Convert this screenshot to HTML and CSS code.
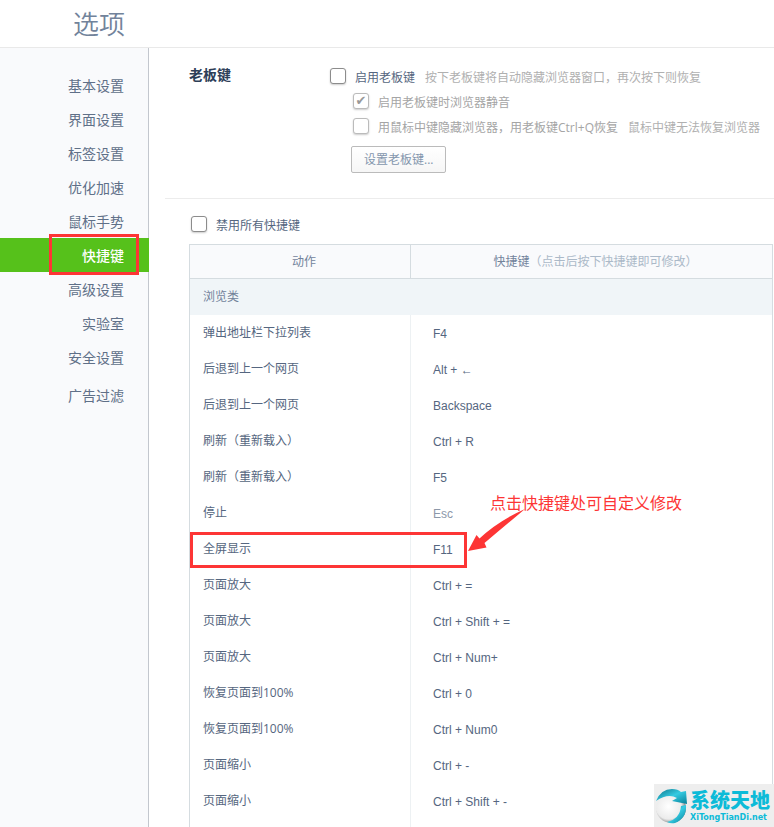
FILE: index.html
```
<!DOCTYPE html>
<html lang="zh-CN">
<head>
    <meta charset="utf-8">
    <title>选项</title>
    <link rel="stylesheet" href="styles.css">
</head>
<body>
    <header class="header">
        <h1>选项</h1>
    </header>
    <div class="page">
        <nav class="sidebar">
            <a href="#basic">基本设置</a>
            <a href="#ui">界面设置</a>
            <a href="#tabs">标签设置</a>
            <a href="#speed">优化加速</a>
            <a href="#gesture">鼠标手势</a>
            <a href="#hotkey" class="active">快捷键<span class="mark"></span></a>
            <a href="#advanced">高级设置</a>
            <a href="#lab">实验室</a>
            <a href="#security">安全设置</a>
            <a href="#adblock" class="extra">广告过滤</a>
        </nav>
        <main class="content">
            <section class="boss">
                <h2>老板键</h2>
                <div class="boss-options">
                    <div class="option">
                        <input type="checkbox" id="boss-on">
                        <label for="boss-on">启用老板键</label>
                        <span class="tip">按下老板键将自动隐藏浏览器窗口，再次按下则恢复</span>
                    </div>
                    <div class="option sub">
                        <input type="checkbox" id="boss-mute" checked disabled>
                        <label for="boss-mute">启用老板键时浏览器静音</label>
                    </div>
                    <div class="option sub">
                        <input type="checkbox" id="boss-mouse" disabled>
                        <label for="boss-mouse">用鼠标中键隐藏浏览器，用老板键Ctrl+Q恢复</label>
                        <span class="tip">鼠标中键无法恢复浏览器</span>
                    </div>
                    <button type="button" class="btn">设置老板键...</button>
                </div>
            </section>
            <section class="keys">
                <div class="option disable-all">
                    <input type="checkbox" id="disable-all">
                    <label for="disable-all">禁用所有快捷键</label>
                </div>
                <table>
                    <thead>
                        <tr>
                            <th class="action">动作</th>
                            <th>快捷键<span>（点击后按下快捷键即可修改）</span></th>
                        </tr>
                    </thead>
                    <tbody>
                        <tr class="group"><td colspan="2">浏览类</td></tr>
                        <tr><td>弹出地址栏下拉列表</td><td>F4</td></tr>
                        <tr><td>后退到上一个网页</td><td>Alt + ←</td></tr>
                        <tr><td>后退到上一个网页</td><td>Backspace</td></tr>
                        <tr><td>刷新（重新载入）</td><td>Ctrl + R</td></tr>
                        <tr><td>刷新（重新载入）</td><td>F5</td></tr>
                        <tr><td>停止</td><td class="fixed">Esc</td></tr>
                        <tr>
                            <td class="marked">
                                全屏显示
                                <span class="mark"></span>
                                <span class="note">点击快捷键处可自定义修改</span>
                                <svg class="arrow" width="58" height="44" viewBox="0 0 58 44">
                                    <path d="M0 42 L8.500 26 L11.500 29.500 Q30 12 57 0 Q38 16 16.500 34 L18.500 38.500 Z" fill="#fd3535"/>
                                </svg>
                            </td>
                            <td>F11</td>
                        </tr>
                        <tr><td>页面放大</td><td>Ctrl + =</td></tr>
                        <tr><td>页面放大</td><td>Ctrl + Shift + =</td></tr>
                        <tr><td>页面放大</td><td>Ctrl + Num+</td></tr>
                        <tr><td>恢复页面到100%</td><td>Ctrl + 0</td></tr>
                        <tr><td>恢复页面到100%</td><td>Ctrl + Num0</td></tr>
                        <tr><td>页面缩小</td><td>Ctrl + -</td></tr>
                        <tr><td>页面缩小</td><td>Ctrl + Shift + -</td></tr>
                        <tr><td></td><td></td></tr>
                    </tbody>
                </table>
            </section>
        </main>
    </div>
    <div class="watermark">
        <svg width="36" height="38" viewBox="0 0 36 38">
            <defs>
                <radialGradient id="ball" cx="42%" cy="45%" r="60%">
                    <stop offset="0" stop-color="#fff"/>
                    <stop offset="0.7" stop-color="#ececec"/>
                    <stop offset="1" stop-color="#777"/>
                </radialGradient>
                <linearGradient id="swirl" x1="0" y1="0" x2="1" y2="1">
                    <stop offset="0" stop-color="#0a7186"/>
                    <stop offset="0.5" stop-color="#35cbe2"/>
                    <stop offset="1" stop-color="#067f98"/>
                </linearGradient>
            </defs>
            <circle cx="17" cy="21" r="15" fill="url(#ball)"/>
            <path d="M2 14 Q7 2 18 2 Q24 2 27 5 L32 4 L33 17 L18 14 L23 11 Q14 6 2 14 Z" fill="url(#swirl)"/>
            <path d="M32 18 Q33 31 21 36 Q17 37 13 35 Q26 32 27 19 Z" fill="url(#swirl)"/>
        </svg>
        <div class="watermark-text">
            <strong>系统天地</strong>
            <span>XiTongTianDi.net</span>
        </div>
    </div>
</body>
</html>
```
FILE: styles.css
```
* {
    box-sizing: border-box;
}
body {
    margin: 0;
    height: 100vh;
    overflow: hidden;
    display: flex;
    flex-direction: column;
    background: #fff;
    color: #556680;
    font-family: "Open Sans", "Noto Sans CJK SC", sans-serif;
    font-size: 12px;
    line-height: 18px;
}
.header {
    flex: none;
    height: 48px;
    padding-left: 73px;
    border-bottom: 1px solid #e9e9e9;
}
.header h1 {
    margin: 0;
    font-size: 26px;
    font-weight: 350;
    font-family: "Noto Sans CJK SC", sans-serif;
    line-height: 46px;
    color: #72839b;
}
.page {
    flex: 1;
    display: flex;
    min-height: 0;
}

/* Left menu */
.sidebar {
    flex: none;
    width: 149px;
    padding-top: 20px;
    background: #f9fafc;
    border-right: 1px solid #c3c7ce;
}
.sidebar a {
    display: block;
    height: 34px;
    padding-right: 24px;
    font-size: 14px;
    line-height: 36px;
    text-align: right;
    text-decoration: none;
    color: #5f7088;
}
.sidebar .active {
    position: relative;
    margin-right: -1px;
    padding-right: 25px;
    background: #56c11b;
    color: #fff;
    font-weight: 500;
}
.sidebar .extra {
    margin-top: 4px;
}
.mark {
    position: absolute;
    border: 3px solid #fd3535;
}
.sidebar .mark {
    top: -4px;
    left: 49px;
    right: 10px;
    height: 41px;
}

/* Options */
.content {
    flex: 1;
    min-width: 0;
    padding-left: 16px;
    display: flex;
    flex-direction: column;
}
.boss {
    flex: none;
    display: flex;
    padding: 17px 0 25px 24px;
    border-bottom: 1px solid #ececec;
}
.boss h2 {
    width: 141px;
    margin: 0;
    font-size: 14px;
    font-weight: 700;
    line-height: 20px;
    color: #2d3e57;
}
.option {
    display: flex;
    align-items: center;
    height: 25px;
    white-space: nowrap;
}
.option label {
    margin-left: 9px;
}
.tip {
    margin-left: 10px;
    color: #b0b0b0;
}
.sub {
    padding-left: 23px;
    color: #a5a5a5;
}
.option input {
    appearance: none;
    flex: none;
    width: 16px;
    height: 16px;
    margin: 0 0 3px;
    border: 1px solid #8c8c8c;
    border-radius: 3px;
    background: #fff;
    box-shadow: 0 1px 2px #ccc;
}
.option input:disabled {
    border-color: #bbb;
}
.option input:checked::before {
    content: "✔";
    display: block;
    font-family: "DejaVu Sans", sans-serif;
    font-size: 13px;
    line-height: 14px;
    text-align: center;
    color: #999;
}
.btn {
    display: block;
    height: 27px;
    margin: 6px 0 0 21px;
    padding: 0 12px;
    border: 1px solid #bbb;
    border-radius: 2px;
    background: linear-gradient(#fff, #f6f6f6);
    color: #8496ad;
    font: inherit;
}

/* Hotkey table */
.keys {
    flex: none;
    padding: 13px 1px 0 24px;
}
.disable-all {
    height: 27px;
    padding-left: 2px;
}
table {
    width: 100%;
    margin-top: 5px;
    border-collapse: separate;
    border-spacing: 0;
    border: 1px solid #d5dce0;
    table-layout: fixed;
}
th {
    height: 34px;
    padding: 0 0 0 8px;
    border-bottom: 1px solid #d5dce0;
    background: #f9fafc;
    color: #72839b;
    font-weight: 400;
}
th span {
    color: #abb9c8;
}
.action {
    width: 221px;
    border-right: 1px solid #d5dce0;
}
td {
    height: 36px;
    padding: 0 0 0 13px;
}
td:first-child {
    border-right: 1px solid #edf1f3;
}
td + td {
    padding: 2px 0 0 22px;
    font-family: "Liberation Sans", "Noto Sans CJK SC", sans-serif;
}
.group td:first-child {
    border-right: 0;
    background: #f0f5f8;
    color: #72839b;
}
.fixed {
    color: #8c98a9;
}
.marked {
    position: relative;
}
.marked .mark {
    top: 1px;
    left: 0;
    width: 277px;
    height: 36px;
}
.note {
    position: absolute;
    top: -40px;
    left: 300px;
    font-size: 16px;
    line-height: 24px;
    white-space: nowrap;
    color: #fd3535;
}
.arrow {
    position: absolute;
    top: -22px;
    left: 278px;
}

/* Site mark in the corner */
.watermark {
    position: fixed;
    right: 0;
    bottom: 0;
    display: flex;
    align-items: center;
    width: 120px;
    height: 43px;
    background: #eee;
}
.watermark-text {
    display: flex;
    flex-direction: column;
    color: #0cbbd8;
}
.watermark strong {
    font-family: "Noto Sans CJK SC", sans-serif;
    font-size: 20px;
    font-weight: 900;
    line-height: 24px;
}
.watermark span {
    font-family: "DejaVu Sans", sans-serif;
    font-size: 8px;
    font-weight: 700;
    line-height: 12px;
}
```
